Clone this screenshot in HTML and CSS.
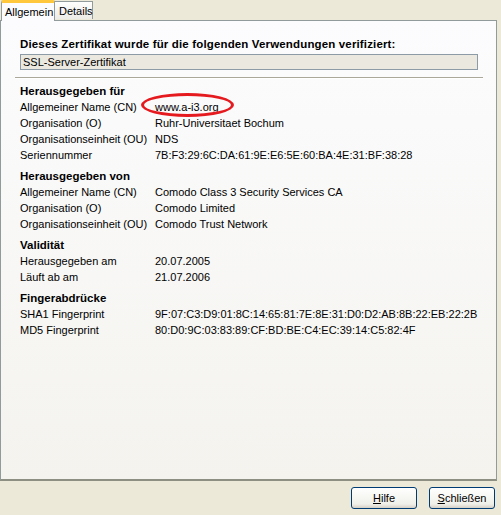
FILE: index.html
```html
<!DOCTYPE html>
<html>
<head>
<meta charset="utf-8">
<link rel="stylesheet" href="styles.css">
</head>
<body>
<div class="dialog">
  <div class="tabs">
    <div class="tab active">Allgemein</div>
    <div class="tab">Details</div>
  </div>
  <div class="panel">
    <div class="intro">Dieses Zertifikat wurde für die folgenden Verwendungen verifiziert:</div>
    <div class="usage">SSL-Server-Zertifikat</div>
    <div class="sep"></div>

    <div class="section">
      <div class="sec-title">Herausgegeben für</div>
      <div class="row"><span class="label">Allgemeiner Name (CN)</span><span class="value marked">www.a-i3.org<span class="ring"></span></span></div>
      <div class="row"><span class="label">Organisation (O)</span><span class="value">Ruhr-Universitaet Bochum</span></div>
      <div class="row"><span class="label">Organisationseinheit (OU)</span><span class="value">NDS</span></div>
      <div class="row"><span class="label">Seriennummer</span><span class="value">7B:F3:29:6C:DA:61:9E:E6:5E:60:BA:4E:31:BF:38:28</span></div>
    </div>

    <div class="section">
      <div class="sec-title">Herausgegeben von</div>
      <div class="row"><span class="label">Allgemeiner Name (CN)</span><span class="value">Comodo Class 3 Security Services CA</span></div>
      <div class="row"><span class="label">Organisation (O)</span><span class="value">Comodo Limited</span></div>
      <div class="row"><span class="label">Organisationseinheit (OU)</span><span class="value">Comodo Trust Network</span></div>
    </div>

    <div class="section">
      <div class="sec-title">Validität</div>
      <div class="row"><span class="label">Herausgegeben am</span><span class="value">20.07.2005</span></div>
      <div class="row"><span class="label">Läuft ab am</span><span class="value">21.07.2006</span></div>
    </div>

    <div class="section">
      <div class="sec-title">Fingerabdrücke</div>
      <div class="row"><span class="label">SHA1 Fingerprint</span><span class="value">9F:07:C3:D9:01:8C:14:65:81:7E:8E:31:D0:D2:AB:8B:22:EB:22:2B</span></div>
      <div class="row"><span class="label">MD5 Fingerprint</span><span class="value">80:D0:9C:03:83:89:CF:BD:BE:C4:EC:39:14:C5:82:4F</span></div>
    </div>
  </div>
  <div class="footer">
    <button class="btn"><u>H</u>ilfe</button>
    <button class="btn"><u>S</u>chließen</button>
  </div>
</div>
</body>
</html>
```
FILE: styles.css
```css
html, body {
  margin: 0;
  padding: 0;
}
body {
  background: #ece9d8;
  font-family: "Liberation Sans", Arial, sans-serif;
  font-size: 11px;
  color: #000;
  width: 501px;
  height: 515px;
  overflow: hidden;
}
.dialog {
  display: flex;
  flex-direction: column;
}
.tabs {
  display: flex;
  align-items: flex-end;
  height: 20px;
  padding-left: 1px;
  position: relative;
  z-index: 2;
}
.tab {
  box-sizing: border-box;
  height: 18px;
  border: 1px solid #919b9c;
  border-bottom: none;
  background: linear-gradient(#fefefe, #ecebe6);
  line-height: 14px;
  margin-bottom: 1px;
  white-space: nowrap;
}
.tab.active {
  position: relative;
  z-index: 3;
  height: 21px;
  margin-bottom: -1px;
  width: 54px;
  padding: 2px 0 0 3px;
  background: #fcfcfe;
  border-top: 3px solid #ffc83c;
  border-radius: 2px 2px 0 0;
  border-color: #ffc83c #919b9c #919b9c #919b9c;
  font-size: 11px;
}
.tab:not(.active) {
  width: 39px;
  margin-left: -1px;
  padding: 2px 0 0 4px;
}
.panel {
  box-sizing: border-box;
  width: 497px;
  height: 461px;
  border: 1px solid #919b9c;
  border-bottom: 2px solid #8c8f82;
  background: linear-gradient(#fcfcfe, #f4f3ee);
  padding: 15px 18px 0 19px;
}
.intro {
  font-weight: bold;
  line-height: 16px;
  font-size: 11.5px;
  letter-spacing: 0.15px;
}
.usage {
  box-sizing: border-box;
  margin-top: 2px;
  height: 16px;
  width: 458px;
  border: 1px solid #8c9ba6;
  background: #ebe8df;
  line-height: 14px;
  padding-left: 2px;
}
.sep {
  margin: 7px -5px 0 -5px;
  width: 468px;
  height: 1px;
  background: #aca899;
  border-bottom: 1px solid #fff;
}
.section {
  margin-top: 4px;
}
.section + .section {
  margin-top: 5px;
}
.sec-title {
  font-weight: bold;
  line-height: 16px;
  font-size: 11.5px;
}
.row {
  display: flex;
  line-height: 16px;
}
.label {
  width: 135px;
  flex: none;
}
.value {
  position: relative;
}
.ring {
  position: absolute;
  left: -14px;
  top: -6px;
  width: 87px;
  height: 18px;
  border: 3px solid #e51a1f;
  border-radius: 50%;
}
.footer {
  display: flex;
  justify-content: flex-end;
  gap: 12px;
  padding: 6px 6px 0 0;
}
.btn {
  box-sizing: border-box;
  width: 66px;
  height: 22px;
  border: 1px solid #003c74;
  border-radius: 3px;
  background: linear-gradient(#ffffff, #f0f0ea 80%, #d6d0c5);
  font-family: "Liberation Sans", Arial, sans-serif;
  font-size: 11px;
  color: #000;
  padding: 0;
}
```
